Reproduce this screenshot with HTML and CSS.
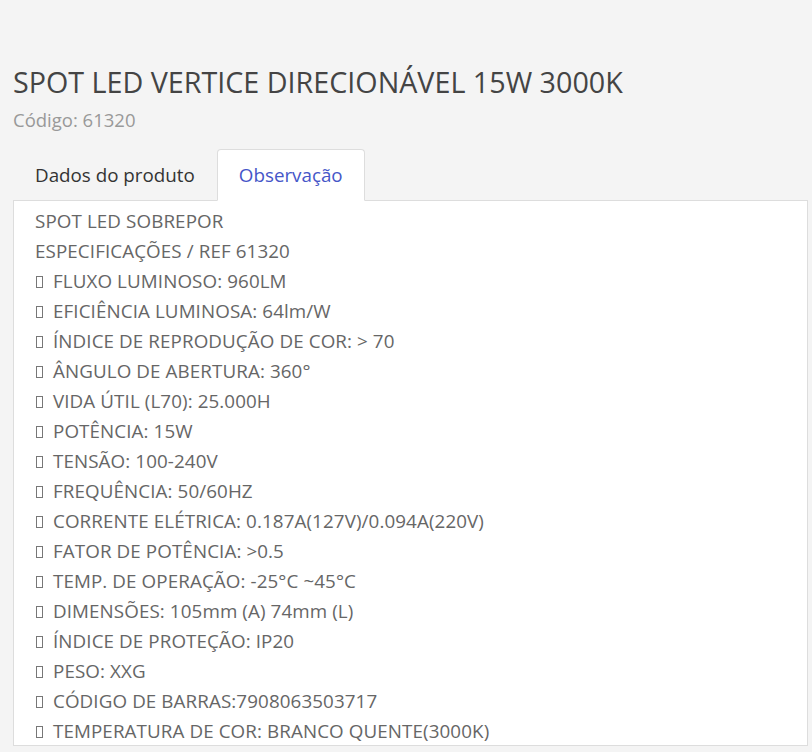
FILE: index.html
```html
<!DOCTYPE html>
<html lang="pt-BR">
<head>
  <meta charset="UTF-8" />
  <title>SPOT LED VERTICE DIRECIONÁVEL 15W 3000K</title>
  <link rel="stylesheet" href="styles.css">
</head>
<body>

  <div class="container">
    <h1 class="product-title">SPOT LED VERTICE DIRECIONÁVEL 15W 3000K</h1>
    <p class="product-code">Código: 61320</p>

    <ul class="tabs">
      <li class="tab">Dados do produto</li>
      <li class="tab active">Observação</li>
    </ul>

    <div class="tab-content">
      <p>SPOT LED SOBREPOR</p>
      <p>ESPECIFICAÇÕES / REF 61320</p>
      <p><span class="box"></span> FLUXO LUMINOSO: 960LM</p>
      <p><span class="box"></span> EFICIÊNCIA LUMINOSA: 64lm/W</p>
      <p><span class="box"></span> ÍNDICE DE REPRODUÇÃO DE COR: &gt; 70</p>
      <p><span class="box"></span> ÂNGULO DE ABERTURA: 360°</p>
      <p><span class="box"></span> VIDA ÚTIL (L70): 25.000H</p>
      <p><span class="box"></span> POTÊNCIA: 15W</p>
      <p><span class="box"></span> TENSÃO: 100-240V</p>
      <p><span class="box"></span> FREQUÊNCIA: 50/60HZ</p>
      <p><span class="box"></span> CORRENTE ELÉTRICA: 0.187A(127V)/0.094A(220V)</p>
      <p><span class="box"></span> FATOR DE POTÊNCIA: &gt;0.5</p>
      <p><span class="box"></span> TEMP. DE OPERAÇÃO: -25°C ~45°C</p>
      <p><span class="box"></span> DIMENSÕES: 105mm (A) 74mm (L)</p>
      <p><span class="box"></span> ÍNDICE DE PROTEÇÃO: IP20</p>
      <p><span class="box"></span> PESO: XXG</p>
      <p><span class="box"></span> CÓDIGO DE BARRAS:7908063503717</p>
      <p><span class="box"></span> TEMPERATURA DE COR: BRANCO QUENTE(3000K)</p>
    </div>
  </div>

</body>
</html>
```
FILE: styles.css
```css
body {
  margin: 0;
  font-family: 'Open Sans', sans-serif;
  background: #f4f4f4;
  color: #444;
}

.container {
  padding: 64px 4px 6px 13px;
}

.product-title {
  margin: 0;
  font-size: 28.7px;
  font-weight: 400;
  line-height: 36px;
  color: #444;
}

.product-code {
  margin: 7px 0 16px;
  font-size: 18.5px;
  line-height: 26px;
  color: #999;
}

.tabs {
  display: flex;
  margin: 0;
  padding: 0;
  list-style: none;
}

.tab {
  padding: 12px 21px 12px 21px;
  font-size: 18.8px;
  line-height: 26px;
  color: #333;
  border: 1px solid transparent;
  border-radius: 4px 4px 0 0;
  margin-bottom: -1px;
}

.tab.active {
  background: #fff;
  color: #4556c8;
  border-color: #ddd #ddd #fff;
}

.tab-content {
  background: #fff;
  border: 1px solid #ddd;
  padding: 5px 20px 0 21px;
  height: 539px;
  overflow: hidden;
  color: #666;
  font-size: 18.8px;
  letter-spacing: 0.1px;
}

.tab-content p {
  margin: 0;
  line-height: 30px;
}

.box {
  display: inline-block;
  width: 5px;
  height: 10px;
  margin-left: 1px;
  margin-right: 5px;
  border: 1px solid #777;
  vertical-align: 0;
}
```
